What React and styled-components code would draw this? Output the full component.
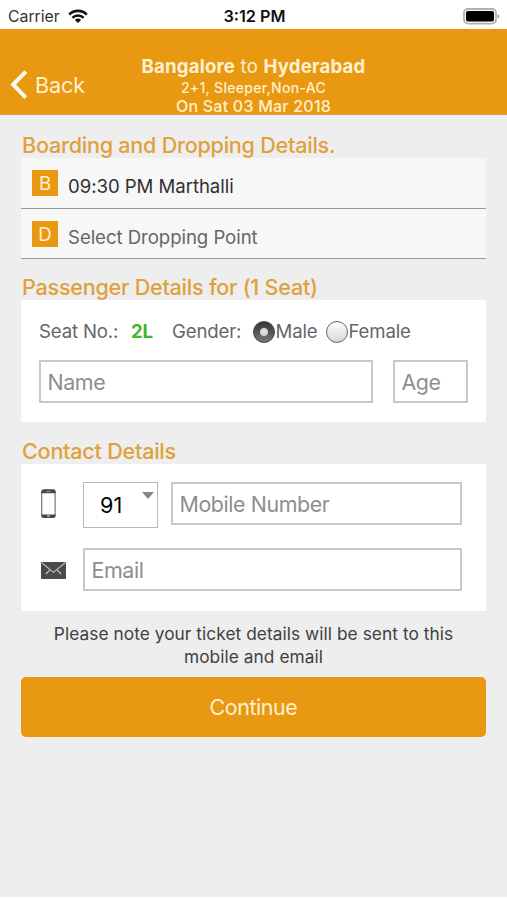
import { useState } from "react";
import styled, { createGlobalStyle } from "styled-components";

const colors = {
  primary: "#e99811",
  heading: "#dfa13c",
  cream: "#fff0cf",
  page: "#eeeeee",
  row: "#f7f7f7",
  text: "#303030",
  muted: "#666666",
  green: "#43b42b",
};

export default function App() {
  const [gender, setGender] = useState("male");
  return (
    <>
      <GlobalStyle />
      <Screen>
        <StatusBar>
          <Carrier>
            Carrier
            <WifiIcon />
          </Carrier>
          <Clock>3:12 PM</Clock>
          <BatteryIcon />
        </StatusBar>
        <Header>
          <BackButton>
            <svg width="18" height="30" viewBox="0 0 18 30" fill="none">
              <path d="M15.8 1.6 L3.2 14.6 L15.8 27.6" stroke="#fffaf0" strokeWidth="4" />
            </svg>
            Back
          </BackButton>
          <Trip>
            <Route>
              <b>Bangalore</b> to <b>Hyderabad</b>
            </Route>
            <BusType>2+1, Sleeper,Non-AC</BusType>
            <TripDate>On Sat 03 Mar 2018</TripDate>
          </Trip>
        </Header>
        <Content>
          <Heading>Boarding and Dropping Details.</Heading>
          <PointRow>
            <Badge>B</Badge>
            <PointText>09:30 PM Marthalli</PointText>
          </PointRow>
          <PointRow>
            <Badge>D</Badge>
            <PointText $muted>Select Dropping Point</PointText>
          </PointRow>

          <Heading $top="16px">Passenger Details for (1 Seat)</Heading>
          <PassengerPanel>
            <SeatRow>
              <SeatLabel>Seat No.:</SeatLabel>
              <SeatNumber>2L</SeatNumber>
              <GenderLabel>Gender:</GenderLabel>
              <Option $width="73px">
                <Radio
                  name="gender"
                  checked={gender === "male"}
                  onChange={() => setGender("male")}
                />
                Male
              </Option>
              <Option>
                <Radio
                  name="gender"
                  checked={gender === "female"}
                  onChange={() => setGender("female")}
                />
                Female
              </Option>
            </SeatRow>
            <FieldRow $gap="20px">
              <Field placeholder="Name" $width="334px" />
              <Field placeholder="Age" $width="75px" />
            </FieldRow>
          </PassengerPanel>

          <Heading $top="17px">Contact Details</Heading>
          <ContactPanel>
            <FieldRow>
              <IconSlot>
                <PhoneIcon />
              </IconSlot>
              <CountryCode>
                91
                <Caret />
              </CountryCode>
              <Field placeholder="Mobile Number" $width="291px" />
            </FieldRow>
            <FieldRow>
              <IconSlot>
                <MailIcon />
              </IconSlot>
              <Field placeholder="Email" $width="379px" />
            </FieldRow>
          </ContactPanel>

          <Note>
            Please note your ticket details will be sent to this
            <br />
            mobile and email
          </Note>
          <ContinueButton>Continue</ContinueButton>
        </Content>
      </Screen>
    </>
  );
}

function WifiIcon() {
  return (
    <svg width="20" height="15" viewBox="0 0 20 15" fill="none" stroke="#111">
      <path d="M1.2 5.6 A12.4 12.4 0 0 1 18.8 5.6" strokeWidth="2.7" />
      <path d="M4.4 8.9 A7.8 7.8 0 0 1 15.6 8.9" strokeWidth="2.5" />
      <path d="M10 14 L6.9 10.9 A4.4 4.4 0 0 1 13.1 10.9 Z" fill="#111" stroke="none" />
    </svg>
  );
}

function BatteryIcon() {
  return (
    <svg width="37" height="17" viewBox="0 0 37 17">
      <rect x="1" y="1" width="32" height="14.6" rx="4" fill="#fff" stroke="#b0b0b0" strokeWidth="1.8" />
      <rect x="3" y="3" width="28" height="10.6" rx="1.8" fill="#000" />
      <path d="M34.6 6 C36.6 6.6 36.6 10 34.6 10.6 Z" fill="#999" />
    </svg>
  );
}

function PhoneIcon() {
  return (
    <svg width="15" height="30" viewBox="0 0 15 30">
      <rect x="0.7" y="0.9" width="13.4" height="27.6" rx="2.2" fill="#fff" stroke="#777" strokeWidth="1.2" />
      <path d="M0.5 4.2 V3 Q0.5 0.5 3 0.5 H12 Q14.5 0.5 14.5 3 V4.2 Z" fill="#484848" />
      <path d="M0.5 25.4 V26.6 Q0.5 29 3 29 H12 Q14.5 29 14.5 26.6 V25.4 Z" fill="#484848" />
      <path d="M5.2 2.6 H9.8" stroke="#aaa" strokeWidth="0.8" />
      <rect x="6" y="26.2" width="3" height="1.6" rx="0.8" fill="#bbb" />
    </svg>
  );
}

function MailIcon() {
  return (
    <svg width="25" height="17" viewBox="0 0 25 17" fill="none">
      <rect width="25" height="17" rx="0.8" fill="#4b4b4b" />
      <g stroke="#c8c8c8" strokeWidth="1.1">
        <path d="M1 0.8 L12.5 10.4 L24 0.8" />
        <path d="M4.8 12 L9 7.8 M20.2 12 L16 7.8" />
      </g>
    </svg>
  );
}

const GlobalStyle = createGlobalStyle`
  * {
    box-sizing: border-box;
  }
  body {
    margin: 0;
    background: #fff;
    font-family: Inter, "Liberation Sans", sans-serif;
  }
  button, input {
    font-family: inherit;
  }
`;
const Screen = styled.div`
  width: 507px;
  height: 897px;
  background: ${colors.page};
`;
const StatusBar = styled.div`
  height: 29px;
  padding: 3px 7px 0 8px;
  display: grid;
  grid-template-columns: 1fr auto 1fr;
  align-items: center;
  background: #fff;
  > :last-child {
    justify-self: end;
  }
`;
const Carrier = styled.div`
  display: flex;
  align-items: center;
  gap: 8px;
  font-size: 15.8px;
  color: #333;
`;
const Clock = styled.div`
  padding-left: 1px;
  font-size: 16.3px;
  font-weight: 600;
  color: #111;
`;
const Header = styled.header`
  height: 86px;
  padding: 26px 0 0 10px;
  display: grid;
  grid-template-columns: 100px 1fr 110px;
  background: ${colors.primary};
  border-bottom: 1px solid #c9a563;
`;
const BackButton = styled.button`
  height: 60px;
  padding: 0;
  display: flex;
  align-items: center;
  gap: 7px;
  border: 0;
  background: none;
  color: ${colors.cream};
  font-size: 21.6px;
  letter-spacing: -0.1px;
`;
const Trip = styled.div`
  text-align: center;
  white-space: nowrap;
  color: ${colors.cream};
`;
const Route = styled.div`
  font-size: 18.6px;
  line-height: 23px;
  letter-spacing: 0.2px;
  b {
    font-weight: 700;
  }
`;
const BusType = styled.div`
  font-size: 14px;
  line-height: 19px;
  font-weight: 500;
  letter-spacing: 0.3px;
`;
const TripDate = styled.div`
  font-size: 16px;
  line-height: 19px;
  font-weight: 500;
  letter-spacing: 0.23px;
`;
const Content = styled.main`
  padding: 18px 21px 0;
`;
const Heading = styled.h2`
  margin: ${(p) => p.$top || 0} 0 0;
  padding-left: 1px;
  font-size: 21.6px;
  line-height: 25px;
  font-weight: 500;
  letter-spacing: -0.25px;
  color: ${colors.heading};
`;
const PointRow = styled.div`
  height: 50.5px;
  padding: 12px 11px 0;
  display: flex;
  gap: 10px;
  background: ${colors.row};
  border-bottom: 1px solid #999;
`;
const Badge = styled.span`
  width: 26px;
  height: 26px;
  text-align: center;
  font-size: 18.6px;
  line-height: 26px;
  color: ${colors.cream};
  background: ${colors.primary};
`;
const PointText = styled.span`
  font-size: 18.6px;
  line-height: 33px;
  letter-spacing: -0.05px;
  color: ${(p) => (p.$muted ? colors.muted : colors.text)};
`;
const Panel = styled.section`
  background: #fff;
`;
const PassengerPanel = styled(Panel)`
  height: 122px;
  padding: 19px 18px 0;
`;
const ContactPanel = styled(Panel)`
  height: 147px;
  padding: 18px 20px 0;
  display: flex;
  flex-direction: column;
  gap: 20px;
`;
const SeatRow = styled.div`
  height: 24px;
  margin-bottom: 17px;
  display: flex;
  align-items: center;
  font-size: 18.6px;
  letter-spacing: -0.15px;
  color: ${colors.muted};
`;
const SeatLabel = styled.span`
  width: 92px;
`;
const SeatNumber = styled.span`
  width: 41px;
  font-weight: 700;
  color: ${colors.green};
`;
const GenderLabel = styled.span`
  width: 81px;
`;
const Option = styled.label`
  width: ${(p) => p.$width || "auto"};
  display: flex;
  align-items: center;
`;
const Radio = styled.input.attrs({ type: "radio" })`
  appearance: none;
  flex: none;
  width: 22px;
  height: 22px;
  margin: 1px 0.5px 0 0;
  border: 1.5px solid #666;
  border-radius: 50%;
  background: linear-gradient(#fff, #d6d6d6);
  &:checked {
    border-color: #444;
    background:
      radial-gradient(circle at 50% 50%, #e8e8e8 0, #cfcfcf 3.6px, transparent 4.6px),
      linear-gradient(#333, #777);
  }
`;
const FieldRow = styled.div`
  display: flex;
  gap: ${(p) => p.$gap || 0};
`;
const Field = styled.input`
  width: ${(p) => p.$width};
  height: 43px;
  padding: 0 6.5px;
  border: 2px solid #c8c8c8;
  border-radius: 0;
  outline: none;
  background: #fff;
  font-size: 21.4px;
  letter-spacing: -0.4px;
  &::placeholder {
    color: #8e8e8e;
    opacity: 1;
  }
`;
const IconSlot = styled.div`
  width: 42px;
  height: 44px;
  display: flex;
  align-items: center;
`;
const CountryCode = styled.div`
  width: 75px;
  height: 46px;
  margin-right: 13px;
  padding: 0 3px 0 16px;
  display: flex;
  justify-content: space-between;
  border: 1.5px solid #b8b8b8;
  font-size: 21.6px;
  line-height: 44px;
  color: #000;
`;
const Caret = styled.span`
  margin-top: 9px;
  width: 0;
  height: 0;
  border: 6.5px solid transparent;
  border-top: 7px solid #888;
  border-bottom: 0;
`;
const Note = styled.p`
  margin: 11px 0 9px;
  text-align: center;
  font-size: 17.3px;
  line-height: 23px;
  letter-spacing: 0.06px;
  color: #404040;
`;
const ContinueButton = styled.button`
  width: 100%;
  height: 60px;
  border: 0;
  border-radius: 5px;
  background: ${colors.primary};
  color: ${colors.cream};
  font-size: 21.4px;
  letter-spacing: -0.4px;
`;
